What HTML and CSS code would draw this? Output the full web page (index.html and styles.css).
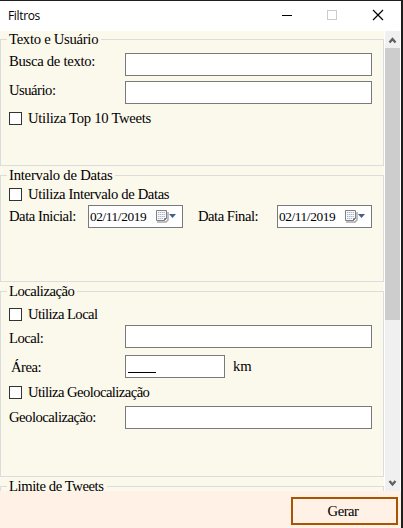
FILE: index.html
```
<!DOCTYPE html>
<html lang="pt-BR">
<head>
<meta charset="utf-8">
<title>Filtros</title>
<link rel="stylesheet" href="styles.css">
</head>
<body>
<div class="window">
  <header class="titlebar">
    <span class="title">Filtros</span>
    <svg class="controls" width="126" height="30" viewBox="0 0 126 30" shape-rendering="crispEdges">
      <path d="M6 14.500h10" stroke="#000" fill="none"/>
      <rect x="51.500" y="9.500" width="9" height="9" stroke="#ccc" fill="none"/>
      <path d="M97 9l10 10M107 9l-10 10" stroke="#000" stroke-width="1.200" fill="none" shape-rendering="auto"/>
    </svg>
  </header>
  <div class="body">
    <main class="content">
      <section class="group g-text">
        <h2 class="legend w-texto">Texto e Usuário</h2>
        <div class="row"><label class="label w-busca">Busca de texto:</label><div class="field"></div></div>
        <div class="row r-user"><label class="label d1 w-usuario">Usuário:</label><div class="field"></div></div>
        <div class="check c-top"><i class="box"></i><span class="w-top">Utiliza Top 10 Tweets</span></div>
      </section>
      <section class="group g-dates">
        <h2 class="legend w-intervalo">Intervalo de Datas</h2>
        <div class="check c-dates"><i class="box"></i><span class="w-uint">Utiliza Intervalo de Datas</span></div>
        <div class="row r-dates">
          <label class="label d3 first-date">Data Inicial:</label>
          <div class="date"><span>02/11/2019</span>
            <svg width="23" height="15" viewBox="0 0 23 15"><path d="M2 13h9l2-2V3" stroke="#aaa" stroke-width="1.500" fill="none"/><path d="M1.500 1.500h10v8l-2 2h-8z" fill="#f6f8fb" stroke="#85807d"/><path d="M3 3.500h7M3 5.500h7M3 7.500h7M3 9.500h5" stroke="#a9b8ce" stroke-dasharray="1.400 .6"/><path d="M9.500 11.500v-2h2" fill="none" stroke="#777"/><path d="M14 5h7l-3.500 4z" fill="#435f8f"/></svg>
          </div>
          <label class="label d3 second-date">Data Final:</label>
          <div class="date"><span>02/11/2019</span>
            <svg width="23" height="15" viewBox="0 0 23 15"><path d="M2 13h9l2-2V3" stroke="#aaa" stroke-width="1.500" fill="none"/><path d="M1.500 1.500h10v8l-2 2h-8z" fill="#f6f8fb" stroke="#85807d"/><path d="M3 3.500h7M3 5.500h7M3 7.500h7M3 9.500h5" stroke="#a9b8ce" stroke-dasharray="1.400 .6"/><path d="M9.500 11.500v-2h2" fill="none" stroke="#777"/><path d="M14 5h7l-3.500 4z" fill="#435f8f"/></svg>
          </div>
        </div>
      </section>
      <section class="group g-place">
        <h2 class="legend w-loc">Localização</h2>
        <div class="check c-local"><i class="box"></i><span class="w-ulocal">Utiliza Local</span></div>
        <div class="row r-local"><label class="label d5 w-local">Local:</label><div class="field"></div></div>
        <div class="row r-area"><label class="label area">Área:</label><div class="field short"><span class="mask"></span></div><span class="unit">km</span></div>
        <div class="check c-geo"><i class="box"></i><span class="w-ugeo">Utiliza Geolocalização</span></div>
        <div class="row r-geo"><label class="label d3 w-geo">Geolocalização:</label><div class="field"></div></div>
      </section>
      <section class="group g-limit">
        <h2 class="legend w-limite">Limite de Tweets</h2>
      </section>
    </main>
    <div class="scrollbar">
      <svg width="15" height="17" viewBox="0 0 15 17"><path d="M4.500 11.500L7.500 8l3 3.500" stroke="#606060" stroke-width="2.300" fill="none"/></svg>
      <div class="thumb"></div>
      <svg class="down" width="15" height="17" viewBox="0 0 15 17"><path d="M4.500 7l3 3.500 3-3.500" stroke="#606060" stroke-width="2.300" fill="none"/></svg>
    </div>
  </div>
  <footer class="footer"><button class="go">Gerar</button></footer>
</div>
</body>
</html>
```
FILE: styles.css
```
* { box-sizing: border-box; }
body {
  margin: 0;
  width: 403px;
  height: 528px;
  overflow: hidden;
  font: 14.67px/17px "Liberation Serif", serif;
  letter-spacing: -.28px;
  color: #000;
  white-space: nowrap;
  background: #1e1e1e;
}
.window { width: 401px; height: 528px; border-top: 1px solid #221f22; background: #fff; }
.titlebar { height: 30px; display: flex; align-items: center; justify-content: space-between; padding-left: 8px; }
.title { font: 12px/16px "Open Sans", sans-serif; letter-spacing: -.35px; }
.controls { display: block; margin-right: -1px; }
.body { height: 460px; display: flex; }
.content { width: 384px; height: 460px; padding-top: 8px; overflow: hidden; background: #fbf8ec; display: flex; flex-direction: column; gap: 9px; margin-right: 1px; }
.group { position: relative; flex: none; border: 1px solid #dcdcdc; }
.g-text { height: 127px; padding-top: 13px; }
.g-dates { height: 107px; padding-top: 12px; }
.g-place { height: 186px; padding-top: 16px; }
.g-limit { height: 60px; }
.legend { position: absolute; left: 6px; top: -9px; margin: 0; padding: 0 3px 0 2px; font-size: inherit; font-weight: normal; background: #fbf8ec; }
.row { display: flex; height: 23px; padding-left: 8px; }
.r-user { margin-top: 5px; }
.r-dates { margin-top: 4px; }
.r-local { margin-top: 4px; }
.r-area { margin-top: 7px; }
.r-geo { margin-top: 7px; }
.label { width: 116px; flex: none; }
.d1 { margin-top: 1px; }
.d3 { margin-top: 3px; }
.d5 { margin-top: 5px; }
.w-usuario, .w-local, .w-loc, .w-geo { letter-spacing: -.5px; }
.w-intervalo { letter-spacing: -.22px; }
.w-uint { letter-spacing: -.38px; }
.w-limite { letter-spacing: -.42px; }
.w-ulocal, .w-ugeo { letter-spacing: -.57px; }
.area { margin-top: 4px; padding-left: 2px; letter-spacing: -.5px; }
.field { width: 247px; height: 23px; background: #fff; border: 1px solid #7a7a7a; }
.short { width: 100px; }
.mask { display: block; width: 28px; height: 1px; margin: 16px 0 0 2px; background: #000; }
.unit { margin: 3px 0 0 8px; letter-spacing: 0; }
.check { display: flex; height: 13px; padding-left: 8px; }
.check span { margin: -2px 0 0 6px; }
.c-top { margin-top: 8px; }
.c-geo { margin-top: 8px; }
.box { width: 13px; height: 13px; background: #fff; border: 1px solid #333; }
.first-date { width: 79px; letter-spacing: -.46px; }
.second-date { width: 79px; margin-left: 15px; letter-spacing: -.5px; }
.date { width: 95px; height: 23px; background: #fff; border: 1px solid #7a7a7a; display: flex; align-items: center; padding-left: 1px; font-size: 13.33px; letter-spacing: -.4px; }
.date span { width: 65px; }
.date svg { display: block; flex: none; }
.scrollbar { width: 15px; height: 460px; background: #f0f0f0; display: flex; flex-direction: column; }
.scrollbar svg { display: block; flex: none; }
.thumb { height: 272px; background: #cdcdcd; }
.scrollbar .down { margin-top: auto; }
.footer { height: 37px; padding: 6px 3px 0 0; background: #fff1e6; display: flex; justify-content: flex-end; align-items: flex-start; }
.go { width: 107px; height: 28px; padding: 0 3px 0 0; border: 2px solid #a85400; background: #fff1e6; color: #000; font: inherit; letter-spacing: -.5px; }
```
